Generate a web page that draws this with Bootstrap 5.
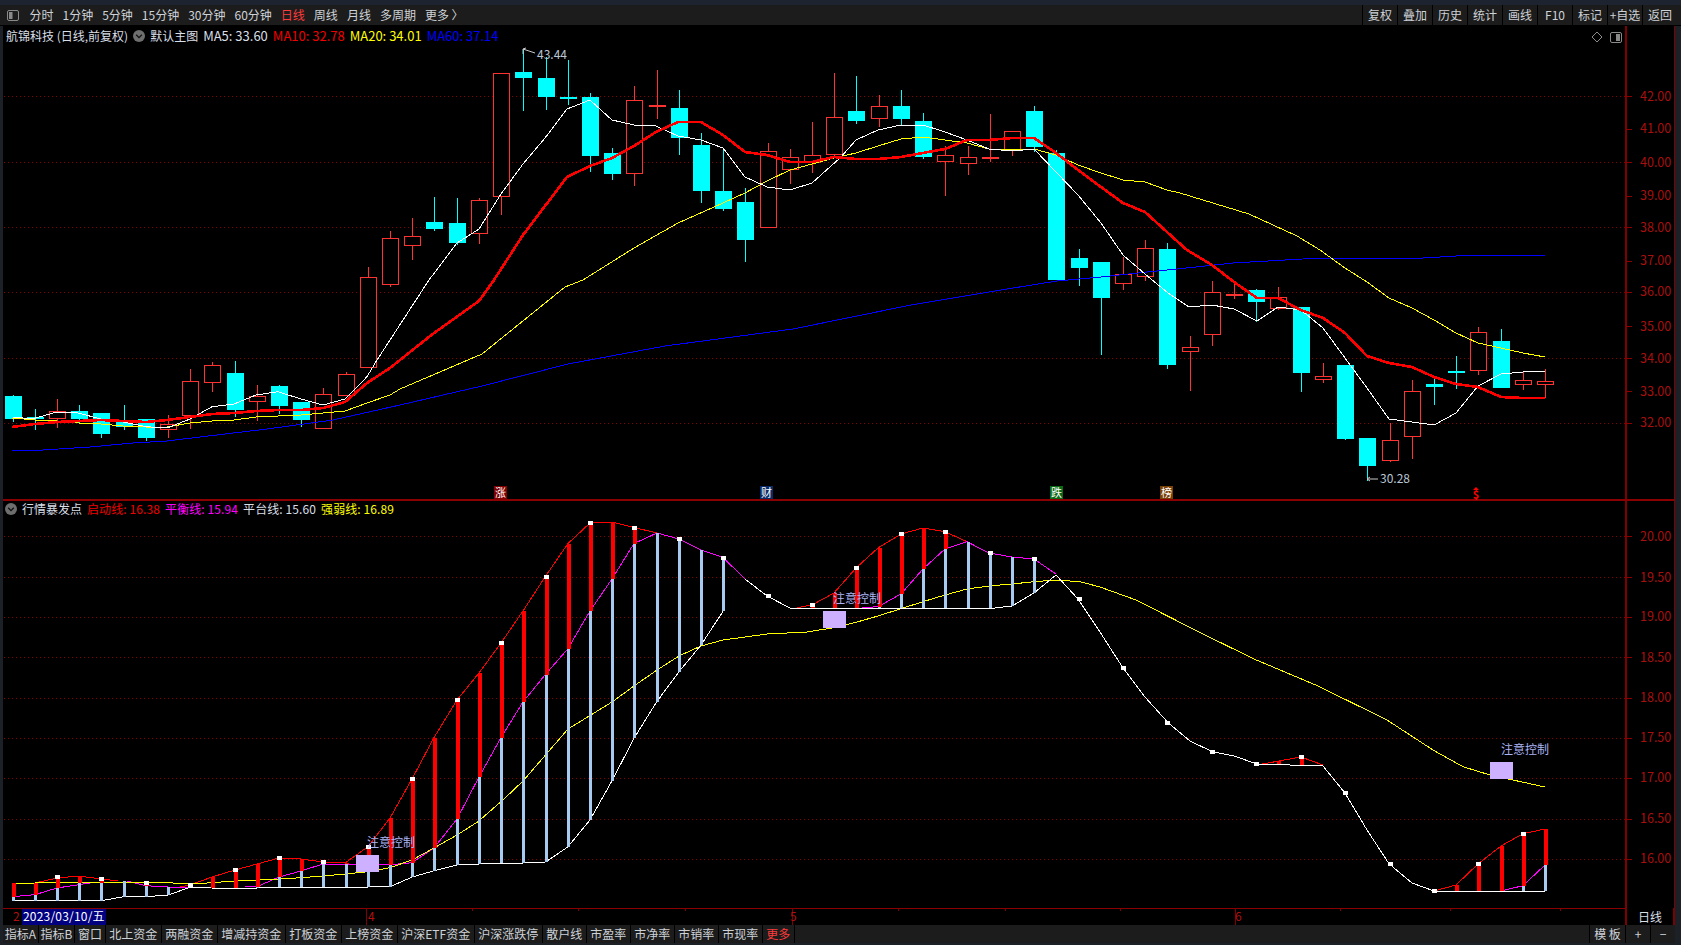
<!DOCTYPE html>
<html lang="zh-CN">
<head>
<meta charset="utf-8">
<title>航锦科技 日线</title>
<link href="https://cdn.jsdelivr.net/npm/bootstrap@5.3.0/dist/css/bootstrap.min.css" rel="stylesheet">
<style>
html,body{height:100%;}
body{background:#1c2027;overflow:hidden;font-family:"Noto Sans CJK SC","Liberation Sans",sans-serif;font-size:12px;color:#d4d8dc;}
.shell{width:1681px;height:945px;}
.strip{height:5px;background:#1d2430;}
.toolbar{height:20px;background:#1c1c1c;}
.toolbar-gap{height:1px;background:#000;}
.tool-item{font-size:12px;line-height:20px;padding:0 4.5px;border:0;border-radius:0;color:#cdd2d7;white-space:nowrap;}
.tool-item.on{color:#ff3b3b;}
.tool-fixed{width:35px;padding:0;text-align:center;border-left:1px solid #000;}
.side-icon{margin:0 6px 0 7px;align-self:center;}
.charts{padding:0 6px 0 3px;}
.panel{background:#000;width:1672px;}
.panel svg{display:block;}
.panel-top{height:475px;}
.panel-low{height:407px;}
.legend{position:absolute;left:0;top:0;line-height:20px;gap:5px;padding-left:3px;font-size:12px;white-space:nowrap;}
.legend-low{line-height:15px;padding-left:2px;}
.legend-low span+span{letter-spacing:.1px;}
.legend-ma{font-size:13px;}
.c-white{color:#d8dfe6;}
.c-red{color:#f00000;}
.c-yellow{color:#ffff00;}
.c-blue{color:#0000ff;}
.c-mag{color:#ff00ff;}
.axis-row{height:17px;width:1672px;background:#000;}
.axis-unit{width:50px;line-height:17px;text-align:center;color:#d8dfe6;border-left:2px solid #7f0000;border-right:2px solid #7f0000;}
.bottombar{height:18px;width:1672px;background:#1c1c1c;}
.tab-item{font-size:12px;line-height:18px;padding:0 3.5px;border:0;border-radius:0;border-right:1px solid #000;color:#cdd2d7;white-space:nowrap;}
.tab-item.on{color:#ff3b3b;}
.tab-tight{padding:0 1.75px;}
.tab-tight-b{padding:0 2.75px;}
.tab-square{width:25px;padding:0;text-align:center;border-left:1px solid #000;border-right:0;}
.tab-wide{width:36px;}
svg text{font-family:"Noto Sans CJK SC","Liberation Sans",sans-serif;}
.axis-label{font-size:12.5px;fill:#a80f0f;}
.note{font-size:12px;fill:#aab4f5;}
.peak{font-size:12px;fill:#b9c6d4;}
.tag{font-size:11px;fill:#fff;text-anchor:middle;}
.date-tick{font-size:12px;fill:#b01010;}
.date-now{font-size:12px;fill:#fff;letter-spacing:.2px;}
</style>
</head>
<body>
<div class="shell d-flex flex-column">
  <div class="strip"></div>
  <div class="toolbar d-flex">
    <svg class="side-icon" width="12" height="11" viewBox="0 0 12 11"><rect x=".5" y=".5" width="11" height="10" rx="1.5" fill="none" stroke="#8a8a8a"/><rect x="2" y="2" width="3.5" height="7" fill="#8a8a8a"/></svg>
    <span class="tool-item">分时</span><span class="tool-item">1分钟</span><span class="tool-item">5分钟</span><span class="tool-item">15分钟</span><span class="tool-item">30分钟</span><span class="tool-item">60分钟</span><span class="tool-item on">日线</span><span class="tool-item">周线</span><span class="tool-item">月线</span><span class="tool-item">多周期</span><span class="tool-item">更多 〉</span>
    <div class="ms-auto d-flex me-1">
      <span class="tool-item tool-fixed">复权</span><span class="tool-item tool-fixed">叠加</span><span class="tool-item tool-fixed">历史</span><span class="tool-item tool-fixed">统计</span><span class="tool-item tool-fixed">画线</span><span class="tool-item tool-fixed">F10</span><span class="tool-item tool-fixed">标记</span><span class="tool-item tool-fixed">+自选</span><span class="tool-item tool-fixed">返回</span>
    </div>
  </div>
  <div class="toolbar-gap"></div>
  <div class="charts flex-grow-1 d-flex flex-column">
    <div class="panel panel-top position-relative">
      <svg width="1672" height="475" viewBox="3 26 1672 475">
        <g id="gridTop"></g>
        <g id="candles" shape-rendering="crispEdges"></g>
        <g id="linesTop" fill="none" shape-rendering="crispEdges"></g>
        <g fill="none" stroke="#c8c8c8">
          <path d="M523 49L535 53M523 49v5M523 49l3-1"/>
          <path d="M1367 479H1378M1367 479l3-2M1367 479l3 2"/>
          <path d="M1597 32l5 5-5 5-5-5z" stroke="#8a8a8a"/>
          <rect x="1610.500" y="32.500" width="11" height="10" rx="1.500" stroke="#8a8a8a"/>
        </g>
        <rect x="1616" y="34" width="4" height="7" fill="#8a8a8a"/>
        <text class="peak" x="537" y="59">43.44</text>
        <text class="peak" x="1380" y="483">30.28</text>
        <rect x="494" y="486" width="13" height="13" fill="#800000"/><text class="tag" x="500.500" y="497">涨</text>
        <rect x="760" y="486" width="13" height="13" fill="#0a2a66"/><text class="tag" x="766.500" y="497">财</text>
        <rect x="1050" y="486" width="13" height="13" fill="#0b6a16"/><text class="tag" x="1056.500" y="497">跌</text>
        <rect x="1160" y="486" width="13" height="13" fill="#7a3f05"/><text class="tag" x="1166.500" y="497">榜</text>
        <path d="M1476 487l3 3h-6z" fill="#f00"/>
        <text x="1476" y="499" text-anchor="middle" font-size="11" font-weight="700" fill="#f00">$</text>
        <text class="axis-label" x="1640" y="100.500">42.00</text>
        <text class="axis-label" x="1640" y="133">41.00</text>
        <text class="axis-label" x="1640" y="166.500">40.00</text>
        <text class="axis-label" x="1640" y="200">39.00</text>
        <text class="axis-label" x="1640" y="231.500">38.00</text>
        <text class="axis-label" x="1640" y="265">37.00</text>
        <text class="axis-label" x="1640" y="296">36.00</text>
        <text class="axis-label" x="1640" y="330.500">35.00</text>
        <text class="axis-label" x="1640" y="362.500">34.00</text>
        <text class="axis-label" x="1640" y="395.500">33.00</text>
        <text class="axis-label" x="1640" y="427">32.00</text>
      </svg>
      <div class="legend d-flex align-items-center">
        <span class="c-white">航锦科技 (日线,前复权)</span>
        <svg width="12" height="12" viewBox="0 0 12 12"><circle cx="6" cy="6" r="6" fill="#6e6e6e"/><path d="M3.200 4.800L6 7.600 8.800 4.800" fill="none" stroke="#111" stroke-width="1.300"/></svg>
        <span class="c-white">默认主图</span>
        <span class="c-white legend-ma">MA5: 33.60</span>
        <span class="c-red legend-ma">MA10: 32.78</span>
        <span class="c-yellow legend-ma">MA20: 34.01</span>
        <span class="c-blue legend-ma">MA60: 37.14</span>
      </div>
    </div>
    <div class="panel panel-low position-relative">
      <svg width="1672" height="407" viewBox="3 501 1672 407">
        <g id="gridLow"></g>
        <g id="linesLow" fill="none" shape-rendering="crispEdges"></g>
        <g fill="#cdb0ff" shape-rendering="crispEdges">
          <rect x="356" y="855" width="23" height="17"/>
          <rect x="823" y="611" width="23" height="17"/>
          <rect x="1490" y="762" width="23" height="17"/>
        </g>
        <text class="note" x="367" y="847">注意控制</text>
        <text class="note" x="833" y="603">注意控制</text>
        <text class="note" x="1501" y="754">注意控制</text>
        <text class="axis-label" x="1640" y="541">20.00</text>
        <text class="axis-label" x="1640" y="581.500">19.50</text>
        <text class="axis-label" x="1640" y="621">19.00</text>
        <text class="axis-label" x="1640" y="661.500">18.50</text>
        <text class="axis-label" x="1640" y="701.500">18.00</text>
        <text class="axis-label" x="1640" y="742">17.50</text>
        <text class="axis-label" x="1640" y="782">17.00</text>
        <text class="axis-label" x="1640" y="822.500">16.50</text>
        <text class="axis-label" x="1640" y="862.500">16.00</text>
      </svg>
      <div class="legend legend-low d-flex align-items-center">
        <svg width="12" height="12" viewBox="0 0 12 12"><circle cx="6" cy="6" r="6" fill="#6e6e6e"/><path d="M3.200 4.800L6 7.600 8.800 4.800" fill="none" stroke="#111" stroke-width="1.300"/></svg>
        <span class="c-white">行情暴发点</span>
        <span class="c-red">启动线: 16.38</span>
        <span class="c-mag">平衡线: 15.94</span>
        <span class="c-white">平台线: 15.60</span>
        <span class="c-yellow">强弱线: 16.89</span>
      </div>
    </div>
    <div class="axis-row d-flex">
      <svg width="1622" height="17" viewBox="3 908 1622 17">
        <path d="M3 908.500H1625" stroke="#8b0000" fill="none"/>
        <path d="M366.500 908V925M792.500 908V925M1235.500 908V925" stroke="#7f0000" fill="none"/>
        <path d="M472.500 908v3M578.500 908v3M685.500 908v3M898.500 908v3M1005.500 908v3M1120.500 908v3M1340.500 908v3M1450.500 908v3M1560.500 908v3" stroke="#7f0000" fill="none"/>
        <text class="date-tick" x="13" y="921">2</text>
        <rect x="22" y="909" width="84" height="16" fill="#000080"/>
        <text class="date-now" x="23" y="921">2023/03/10/五</text>
        <text class="date-tick" x="368" y="921">4</text>
        <text class="date-tick" x="790" y="921">5</text>
        <text class="date-tick" x="1235" y="921">6</text>
      </svg>
      <div class="axis-unit">日线</div>
    </div>
    <div class="bottombar d-flex">
      <span class="tab-item tab-tight">指标A</span><span class="tab-item tab-tight">指标B</span><span class="tab-item tab-tight-b">窗口</span><span class="tab-item">北上资金</span><span class="tab-item">两融资金</span><span class="tab-item">增减持资金</span><span class="tab-item">打板资金</span><span class="tab-item">上榜资金</span><span class="tab-item">沪深ETF资金</span><span class="tab-item">沪深涨跌停</span><span class="tab-item">散户线</span><span class="tab-item">市盈率</span><span class="tab-item">市净率</span><span class="tab-item">市销率</span><span class="tab-item">市现率</span><span class="tab-item on">更多</span>
      <div class="ms-auto d-flex">
        <span class="tab-item tab-square tab-wide">模 板</span><span class="tab-item tab-square">+</span><span class="tab-item tab-square">−</span>
      </div>
    </div>
  </div>
</div>
<script src="https://cdn.jsdelivr.net/npm/bootstrap@5.3.0/dist/js/bootstrap.bundle.min.js"></script>
<script>
const X=i=>12.5+22.21*i;
const R='#ff3232',C='#00ffff';
const K=[
['c',396,418.7,395,421.6],['c',416.7,419.3,409,430],['r',411.3,418.7,399,428],['c',411,419,405,423],['c',413,434,413,437.7],
['c',421.3,426.7,405,430],['c',419,438,419,441],['r',424.3,429.3,415,438],['r',381.3,415.7,369,429],['r',365.3,382.7,362,392],
['c',373,410,361,416.7],['r',396.3,401.3,385,421],['c',386,406,385,414],['c',402,420,402,426.7],['r',394.3,428.7,388,428.7],
['r',374,394.7,372,394.7],['r',276.6,366.7,267,366.7],['r',238,284,230.5,287],['r',236.3,245.7,218,260],['c',222,229,197,231],
['c',223,242.7,198,245],['r',200.3,233.7,198,244],['r',73.3,196.7,73.3,215],['c',72,78,49,111],['c',78,97,57,110],
['c',97,97.7,60,105],['c',97,156,93,172],['c',153,174,148,180],['r',100.3,173.7,86,186],['r',105,107,70,119],
['c',108,138,90,155],['c',145,191,133,203],['c',191,209,150,211],['c',202,240,188,262],['r',151.3,227.7,143,227.7],
['r',157.3,169.7,149,184],['r',155.3,162,122,173],['r',117.3,154.7,73,156.7],['c',111,121,76,124],['r',106.3,118.7,95,127],
['c',106,119,90,125],['c',121,157,113,159],['r',155.3,161.7,146,196],['r',157.3,163.7,146,175],['r',157.3,158,114,162],
['r',131.3,149.3,131.3,156],['c',111,147,106,152],['c',153,280,150,280],['c',258,268,249,286],['c',261.6,298,261.6,355],
['r',274,282.7,257,290],['r',248.3,276.7,240,280.7],['c',249,365,243,369],['r',347.3,351.7,336,391],['r',292.3,334.7,281,346],
['r',294,296.7,282,299],['c',290,302,289,321.7],['r',297.3,308,287,310],['c',307,373,307,392],['r',376.3,379.7,363,383],
['c',365,439,365,440],['c',438,466,438,481],['r',440.3,460.7,423,462],['r',391.3,436.7,380,459],['c',384,387,379,405],
['c',371,373,356,389],['r',332.3,370.7,327,375],['c',341,388,329,388],['r',380.3,384.7,371,390],['r',381.3,384.7,369,398]];
let h='';
K.forEach((k,i)=>{
  const x=Math.round(X(i)),[t,a,b,hi,lo]=k,col=t==='c'?C:R;
  h+=`<path d="M${x+.5} ${hi}V${lo}" stroke="${col}"/>`;
  if(b-a<3){h+=`<rect x="${x-8}" y="${a}" width="17" height="2" fill="${col}"/>`;}
  else if(t==='c'){h+=`<rect x="${x-8}" y="${a}" width="17" height="${b-a}" fill="${C}"/>`;}
  else{h+=`<rect x="${x-7.5}" y="${Math.round(a)+.5}" width="16" height="${Math.round(b-a)}" fill="#000" stroke="${R}"/>`;}
});
document.getElementById('candles').innerHTML=h;
const pl=(p,c,w)=>`<polyline points="${p}" stroke="${c}" stroke-width="${w}"/>`;
const ma5="13,417.300 33,418.700 57,412 78,413 101,419 123,422 146,426.700 167,428 190,419 212,406.700 234,404 256,395 278,391.700 301,399 323,405 345,399 367,376.700 377,360 429,280 457,243 479,229 501,194 523,164 545,138 567,109 590,100 612,120 634,125 656,126 678,136 701,140 723,148 745,177 767,187 790,190 812,183 840,158 856,140 878,130 901,125 923,125 945,132 967,140 989,149 1012,151 1034,149 1056,172 1078,195 1101,223 1123,255 1145,274 1168,293 1189,307 1212,305 1234,309 1257,321 1278,307 1301,310 1323,328 1345,358 1367,388 1389,419 1412,422 1434,425 1456,413 1478,386 1501,374 1523,372 1545,371";
const ma10="12,427 35,424 57,422 79,421 101,420 123,421 146,422 167,420 190,417 212,414 234,413 256,411 278,410 301,410 323,408 345,402 367,383 390,368 400,360 432,334.500 479,301 494,280 523,235 567,177 590,166 612,158 634,146 656,132 678,122 701,122 723,135 745,152 767,155 790,162 812,162 834,157 856,159 878,159 901,157 923,153 945,149 967,140 989,140 1012,138 1034,138 1056,153 1078,170 1101,187 1123,203 1145,212 1167,232 1187,250 1212,265 1234,282 1257,298 1278,298 1301,310 1323,318 1345,333 1367,356 1389,363 1412,367 1434,377 1456,384 1478,387 1501,397 1523,398 1545,398";
const ma20="12,418 35,420 57,421 79,423 101,424 123,426 146,427 167,427 190,423 212,421 234,420 256,417 278,416 301,415 323,413 345,411 367,403 390,395 400,389 482,354 565,287 583,280 634,248 678,223 723,203 745,193 767,181 790,170 812,164 834,158 856,153 878,146 901,139 923,137 945,140 967,143 989,149 1012,149 1034,149 1056,155 1078,165 1101,173 1123,180 1145,182 1167,190 1180,193 1249,214 1297,236 1320,250 1345,268 1367,282 1389,298 1412,308 1434,320 1456,333 1478,343 1501,348 1523,353 1545,357";
const ma60="12,451 43,450 90,447 133,443 167,441 200,437 267,429 333,420 400,405 482,386 568,364 665,346 793,329 911,305 1007,289 1057,281 1101,277 1147,272 1177,269 1233,263 1320,258 1423,258 1473,255 1545,255";
document.getElementById('linesTop').innerHTML=pl(ma60,'#0000ff',1)+pl(ma20,'#ffff00',1)+pl(ma5,'#ffffff',1)+pl(ma10,'#ff0000',2.6);
const grid=(ys,a)=>ys.map(y=>`<path d="M4 ${y}H1625" stroke="#8a0000" stroke-dasharray="1 3" shape-rendering="crispEdges"/>`).join('')+
 `<path d="M1626 26V908M1675 26V908" stroke="#7f0000" stroke-width="2" fill="none" shape-rendering="crispEdges"/>`+
 a.map(y=>`<path d="M1626 ${y}H1632" stroke="#8a0000" shape-rendering="crispEdges"/>`).join('');
document.getElementById('gridTop').innerHTML=grid([96.5,162.5,227.5,292.5,358.5,423.5],[96,129,162,196,227,261,292,326,358,391,423])+'<path d="M3 500H1677" stroke="#8b0000" stroke-width="2" shape-rendering="crispEdges"/>';
document.getElementById('gridLow').innerHTML=grid([536.5,577.5,617.5,657.5,698.5,738.5,778.5,819.5,859.5],[536,577,617,657,698,738,778,819,859]);
const L=[[883.3,896.7,900.7],[882.7,894.7,900.7],[878,888,900.7],[876,883,900.7],[879,882.7,900.7],[881,881,896.7],[883,885.7,896.7],[887,887,895],[885,887,887.3],[877,888,888],[870,888,888],[864,886.7,888],[858,877,887],[859,871,887],[862,864,887],[863,864.3,887],[846.7,864.7,887],[818,864.7,886.7],[779,862.7,877],[737.6,848,870.7],[700,819,865],[673,777,864],[643,737.6,863],[611,702,863],[577,675,862],[543.5,648.6,847],[523,611,820],[522,579,780.5],[527.5,543.5,737.6],[533,533,702],[539,539,672],[550,550,645],[557.5,557.5,611]];
const M={36:[605,608,608],37:[593,608,608],38:[568,608,608],39:[548,606.7,608],40:[534,594,608],41:[528,569,608],42:[531.7,549,608],43:[541.7,541.7,608],44:[553,553,608],45:[557,557,606],46:[559,559,593],57:[761,764,764],58:[757,765,765],65:[885,891,891],66:[864,891,891],67:[846,891,891],68:[833.7,885.7,891],69:[829,865,891]};
L.forEach((v,i)=>{M[i]=v;});
let low='';
const whitePts=L.map((v,i)=>X(i)+','+v[2]);
const whiteTail="745,579 767,596 790,608 995,608 1012,606 1034,593 1056,575 1078,599 1100,632 1123,668 1145,697 1168,722.600 1190,741 1212,751.500 1234,756 1257,764 1323,766 1345,793 1367,830 1389,863.700 1412,883 1434,891 1545,891";
const redPath=[[[35,883],[57,878],[79,876],[101,879],[118,881]],[[180,887],[190,885]],
 [[190,885],[212,877],[235,870],[257,864],[279,858],[301,859],[323,862],[345,863],[368,846.7],[390,818],[412,779],[434,737.6],[457,700],[479,673],[501,643],[523,611],[545,577],[568,543.5],[590,523],[612,522],[634,527.5],[657,533]],
 [[797,607.7],[812,605],[834,593],[856,568],[878,548],[901,534],[923,528],[945,531.7],[967,541.7]],
 [[1257,765],[1279,761],[1301,757],[1323,765]],[[1434,891],[1456,885],[1478,864],[1501,846],[1523,833.7],[1545,829]]];
const magPath=[[[12,896.7],[35,894.7],[57,888],[90,883]],[[127,881],[146,885.7],[168,887],[190,887]],
 [[245,887],[257,886.7],[279,877],[301,871],[323,864],[345,864.3],[368,864.7],[390,864.7],[412,862.7],[434,848],[457,819],[479,777],[501,737.6],[523,702],[545,675],[568,648.6],[590,611],[612,579],[634,543.5],[657,533],[679,539],[701,550],[723,557.5],[745,579]],
 [[862,607.7],[878,606.7],[901,594],[923,569],[945,549],[967,541.7],[989,553],[1012,557],[1034,559],[1056,574]],
 [[1501,891],[1523,885.7],[1545,865]]];
const yel="12,883 35,883 79,882.700 168,882.700 190,884 212,882.700 235,881 279,879 301,877.700 323,876 345,874 368,871.700 390,867.700 412,860 434,848 457,835 478,821.700 504,799 523,781 568,729 612,702 634,686 657,670 679,656 701,646 723,640 745,637 767,634 807,632 832,628 857,622 878,616 900,609 923,601.700 945,595 967,589 989,586 1012,584 1034,581.700 1056,580 1080,581.700 1100,587 1136,600 1200,632.500 1254,659 1318,686 1387,720 1433,750 1463,766.700 1490,775 1545,787";
redPath.forEach(p=>low+=pl(p.join(' '),'#ff0000',1));
magPath.forEach(p=>low+=pl(p.join(' '),'#ff00ff',1));
low+=pl(yel,'#ffff00',1);
low+=pl(whitePts.join(' '),'#ffffff',1)+pl(whiteTail,'#ffffff',1);
let bars='',sq='';
Object.keys(M).forEach(k=>{
  const i=+k,[r,m,w]=M[k],x=Math.round(X(i))-1;
  if(m<w-.5)bars+=`<rect x="${x}" y="${m}" width="3" height="${w-m}" fill="#a6caf0"/>`;
  if(r<m-.5)bars+=`<rect x="${x}" y="${r}" width="3.500" height="${m-r}" fill="#ff0000"/>`;
});
const tops={2:877,4:879,6:883,8:885,10:870,12:858,14:862,16:846.7,18:779,20:700,22:643,24:577,26:523,28:527.5,30:539,32:557.5,34:596,36:605,38:568,40:534,42:531.7,44:553,46:559,48:599,50:668,52:722.6,54:751.5,56:764,58:757,60:793,62:863.7,64:891,66:864,68:833.7};
Object.keys(tops).forEach(k=>{const x=Math.round(X(+k));sq+=`<rect x="${x-2}" y="${tops[k]-2}" width="5" height="4" fill="#fff"/>`;});
document.getElementById('linesLow').innerHTML=low+bars+sq;
</script>
</body>
</html>
